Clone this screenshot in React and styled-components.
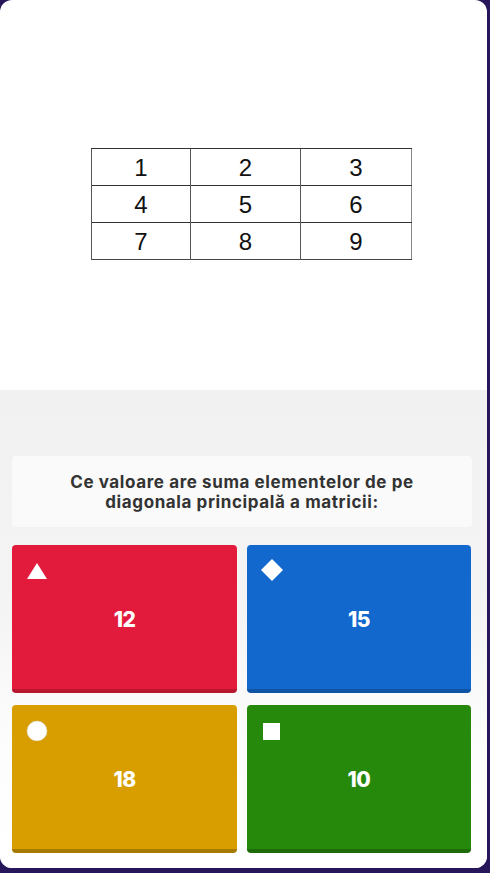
import React from 'react';
import styled, { createGlobalStyle } from 'styled-components';

const GlobalStyle = createGlobalStyle`
  html, body {
    margin: 0;
    padding: 0;
    background: #27175a;
  }
  * { box-sizing: border-box; }
`;

const Screen = styled.div`
  width: 490px;
  height: 873px;
  background: #27175a;
`;

const Card = styled.div`
  width: 487px;
  height: 868px;
  background: #fff;
  border-radius: 12px;
  overflow: hidden;
  display: flex;
  flex-direction: column;
`;

const Media = styled.div`
  height: 390px;
  display: flex;
  justify-content: flex-start;
  align-items: flex-start;
  padding: 148px 0 0 91px;
`;

const Matrix = styled.table`
  border-collapse: collapse;
  font-family: "Liberation Sans", Arial, sans-serif;
  font-size: 24px;
  color: #111;
  border-top: 1.5px solid #333;
  border-bottom: 1px solid #444;
  border-left: 1px solid #888;
  border-right: 1px solid #888;
`;

const Cell = styled.td`
  width: ${p => p.$w}px;
  height: 36px;
  padding: 2px 0 0;
  text-align: center;
  line-height: 34px;
  border-top: 1.5px solid #333;
  border-left: 1px solid #555;
`;

const Quiz = styled.div`
  flex: 1;
  background: linear-gradient(180deg, #f1f1f1 0%, #f4f4f4 45%, #fdfdfd 75%, #ffffff 100%);
  padding: 66px 15px 0 12px;
  display: flex;
  flex-direction: column;
  gap: 18px;
`;

const Question = styled.div`
  background: #fafafa;
  border-radius: 4px;
  height: 71px;
  display: flex;
  align-items: center;
  justify-content: center;
  text-align: center;
  font-family: Inter, "Open Sans", sans-serif;
  font-weight: 700;
  font-size: 17px;
  letter-spacing: 0.6px;
  line-height: 20px;
  color: #333;
  padding: 0 30px;
`;

const Answers = styled.div`
  display: grid;
  grid-template-columns: 225px 224px;
  column-gap: 10px;
  row-gap: 12px;
`;

const Answer = styled.div`
  position: relative;
  height: 148px;
  background: ${p => p.$color};
  border-radius: 4px;
  border-bottom: 4px solid ${p => p.$shade};
  display: flex;
  align-items: center;
  justify-content: center;
  font-family: Inter, "Open Sans", sans-serif;
  font-weight: 800;
  font-size: 21px;
  letter-spacing: -0.5px;
  color: #fff;
  padding-top: 4px;
`;

const Shape = styled.svg`
  position: absolute;
  left: 14px;
  top: 14px;
`;

const shapes = {
  triangle: <polygon points="11,4 21,20 1,20" fill="#fff" />,
  diamond: <polygon points="11,0 22,11 11,22 0,11" fill="#fff" />,
  circle: <circle cx="11" cy="12" r="10" fill="#fff" stroke="#d8d8d8" strokeWidth="0.5" />,
  square: <rect x="2" y="4" width="17" height="17" fill="#fff" />,
};

const answers = [
  { value: '12', color: '#e21b3c', shade: '#b8172f', shape: 'triangle' },
  { value: '15', color: '#1368ce', shade: '#0f53a5', shape: 'diamond' },
  { value: '18', color: '#d89e00', shade: '#a67a00', shape: 'circle' },
  { value: '10', color: '#26890c', shade: '#1d6b09', shape: 'square' },
];

const rows = [[1, 2, 3], [4, 5, 6], [7, 8, 9]];
const widths = [99, 110, 111];

export default function App() {
  return (
    <Screen>
      <GlobalStyle />
      <Card>
        <Media>
          <Matrix>
            <tbody>
              {rows.map((row, i) => (
                <tr key={i}>
                  {row.map((n, j) => (
                    <Cell key={j} $w={widths[j]}>{n}</Cell>
                  ))}
                </tr>
              ))}
            </tbody>
          </Matrix>
        </Media>
        <Quiz>
          <Question>Ce valoare are suma elementelor de pe diagonala principală a matricii:</Question>
          <Answers>
            {answers.map(a => (
              <Answer key={a.value} $color={a.color} $shade={a.shade}>
                <Shape width="22" height="22" viewBox="0 0 22 22">{shapes[a.shape]}</Shape>
                {a.value}
              </Answer>
            ))}
          </Answers>
        </Quiz>
      </Card>
    </Screen>
  );
}
